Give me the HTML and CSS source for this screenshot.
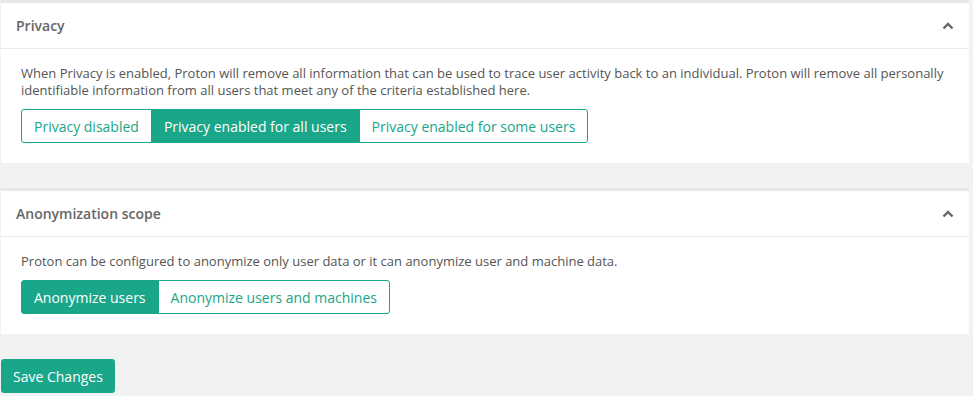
FILE: index.html
```html
<!DOCTYPE html>
<html lang="en">
<head>
  <meta charset="UTF-8">
  <meta name="viewport" content="width=device-width, initial-scale=1.0">
  <title>Privacy Settings</title>
  <link rel="stylesheet" href="styles.css">
</head>
<body>
  <div class="panel">
    <div class="panel-heading">
      <span>Privacy</span>
      <svg class="chevron" width="12" height="8" viewBox="0 0 12 8"><path d="M1.5 6.5 L6 2 L10.5 6.5" fill="none" stroke="#666" stroke-width="2.4"/></svg>
    </div>
    <div class="panel-body">
      <p>When Privacy is enabled, Proton will remove all information that can be used to trace user activity back to an individual. Proton will remove all personally identifiable information from all users that meet any of the criteria established here.</p>
      <div class="btn-group">
        <button class="btn">Privacy disabled</button>
        <button class="btn active">Privacy enabled for all users</button>
        <button class="btn">Privacy enabled for some users</button>
      </div>
    </div>
  </div>

  <div class="panel">
    <div class="panel-heading">
      <span>Anonymization scope</span>
      <svg class="chevron" width="12" height="8" viewBox="0 0 12 8"><path d="M1.5 6.5 L6 2 L10.5 6.5" fill="none" stroke="#666" stroke-width="2.4"/></svg>
    </div>
    <div class="panel-body">
      <p>Proton can be configured to anonymize only user data or it can anonymize user and machine data.</p>
      <div class="btn-group">
        <button class="btn active">Anonymize users</button>
        <button class="btn">Anonymize users and machines</button>
      </div>
    </div>
  </div>

  <button class="btn-save">Save Changes</button>
</body>
</html>
```

FILE: styles.css
```css
body {
  font-family: 'Open Sans', 'Liberation Sans', sans-serif;
  font-size: 13px;
  margin: 0;
  padding: 0 4px 0 1px;
  background-color: #f2f2f2;
  color: #555;
}
.panel {
  background-color: #fff;
  border-top: 3px solid #e5e8eb;
  margin-bottom: 25px;
}
.panel-heading {
  display: flex;
  justify-content: space-between;
  align-items: center;
  height: 45px;
  padding: 0 15px;
  border-bottom: 1px solid #e8eaec;
  color: #666;
  font-size: 14px;
  font-weight: 600;
}
.panel-body {
  padding: 16px 20px 20px;
}
.panel-body p {
  margin: 0 0 10px;
  line-height: 17px;
}
.btn-group {
  display: inline-flex;
}
.btn {
  font-family: inherit;
  font-size: 14px;
  height: 34px;
  padding: 0 12px;
  background: #fff;
  color: #1aa689;
  border: 1px solid #1aa689;
  margin-left: -1px;
  cursor: pointer;
}
.btn:first-child {
  margin-left: 0;
  border-radius: 3px 0 0 3px;
}
.btn:last-child {
  border-radius: 0 3px 3px 0;
}
.btn.active {
  background: #1aa689;
  color: #fff;
}
.btn-save {
  font-family: inherit;
  font-size: 14px;
  height: 34px;
  padding: 0 12px;
  background: #1aa689;
  color: #fff;
  border: none;
  border-radius: 3px;
  cursor: pointer;
}
```
